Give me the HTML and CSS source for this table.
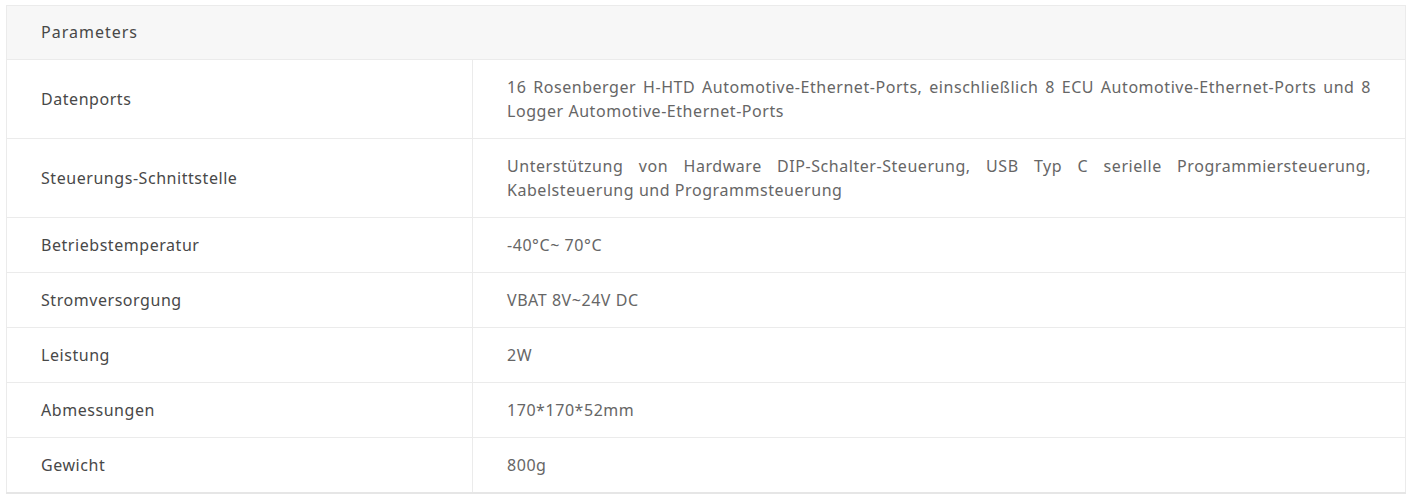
FILE: index.html
```html
<!DOCTYPE html>
<html lang="de">
<head>
<meta charset="utf-8">
<title>Parameters</title>
<link rel="stylesheet" href="styles.css">
</head>
<body>
<div class="wrap">
  <table class="params">
    <colgroup><col class="c1"><col class="c2"></colgroup>
    <thead>
      <tr><th colspan="2">Parameters</th></tr>
    </thead>
    <tbody>
      <tr><td class="k">Datenports</td><td class="v">16 Rosenberger H-HTD Automotive-Ethernet-Ports, einschließlich 8 ECU Automotive-Ethernet-Ports und 8 Logger Automotive-Ethernet-Ports</td></tr>
      <tr><td class="k">Steuerungs-Schnittstelle</td><td class="v">Unterstützung von Hardware DIP-Schalter-Steuerung, USB Typ C serielle Programmiersteuerung, Kabelsteuerung und Programmsteuerung</td></tr>
      <tr><td class="k">Betriebstemperatur</td><td class="v">-40°C~ 70°C</td></tr>
      <tr><td class="k">Stromversorgung</td><td class="v">VBAT 8V~24V DC</td></tr>
      <tr><td class="k">Leistung</td><td class="v">2W</td></tr>
      <tr><td class="k">Abmessungen</td><td class="v">170*170*52mm</td></tr>
      <tr><td class="k">Gewicht</td><td class="v">800g</td></tr>
    </tbody>
  </table>
</div>
</body>
</html>
```
FILE: styles.css
```css
html, body {
  margin: 0;
  padding: 0;
  background: #fff;
}
.wrap {
  padding: 5px 9px 0 6px;
}
.params {
  width: 1400px;
  border-collapse: collapse;
  table-layout: fixed;
  font-family: "Noto Sans", "Open Sans", sans-serif;
  font-size: 16px;
  letter-spacing: 0.55px;
  line-height: 24px;
  border: 1px solid #ebebeb;
  border-bottom: 2px solid #e6e6e6;
}
.params .c1 {
  width: 466px;
}
.params th {
  background: #f7f7f7;
  color: #484848;
  font-weight: normal;
  letter-spacing: 1px;
  text-align: left;
  padding: 14px 34px 15px;
  border-bottom: 1px solid #ebebeb;
}
.params td {
  padding: 15px 34px;
  border-top: 1px solid #ebebeb;
  vertical-align: middle;
}
.params td.k {
  color: #484848;
  border-right: 1px solid #ebebeb;
}
.params td.v {
  color: #666;
  text-align: justify;
}
```
